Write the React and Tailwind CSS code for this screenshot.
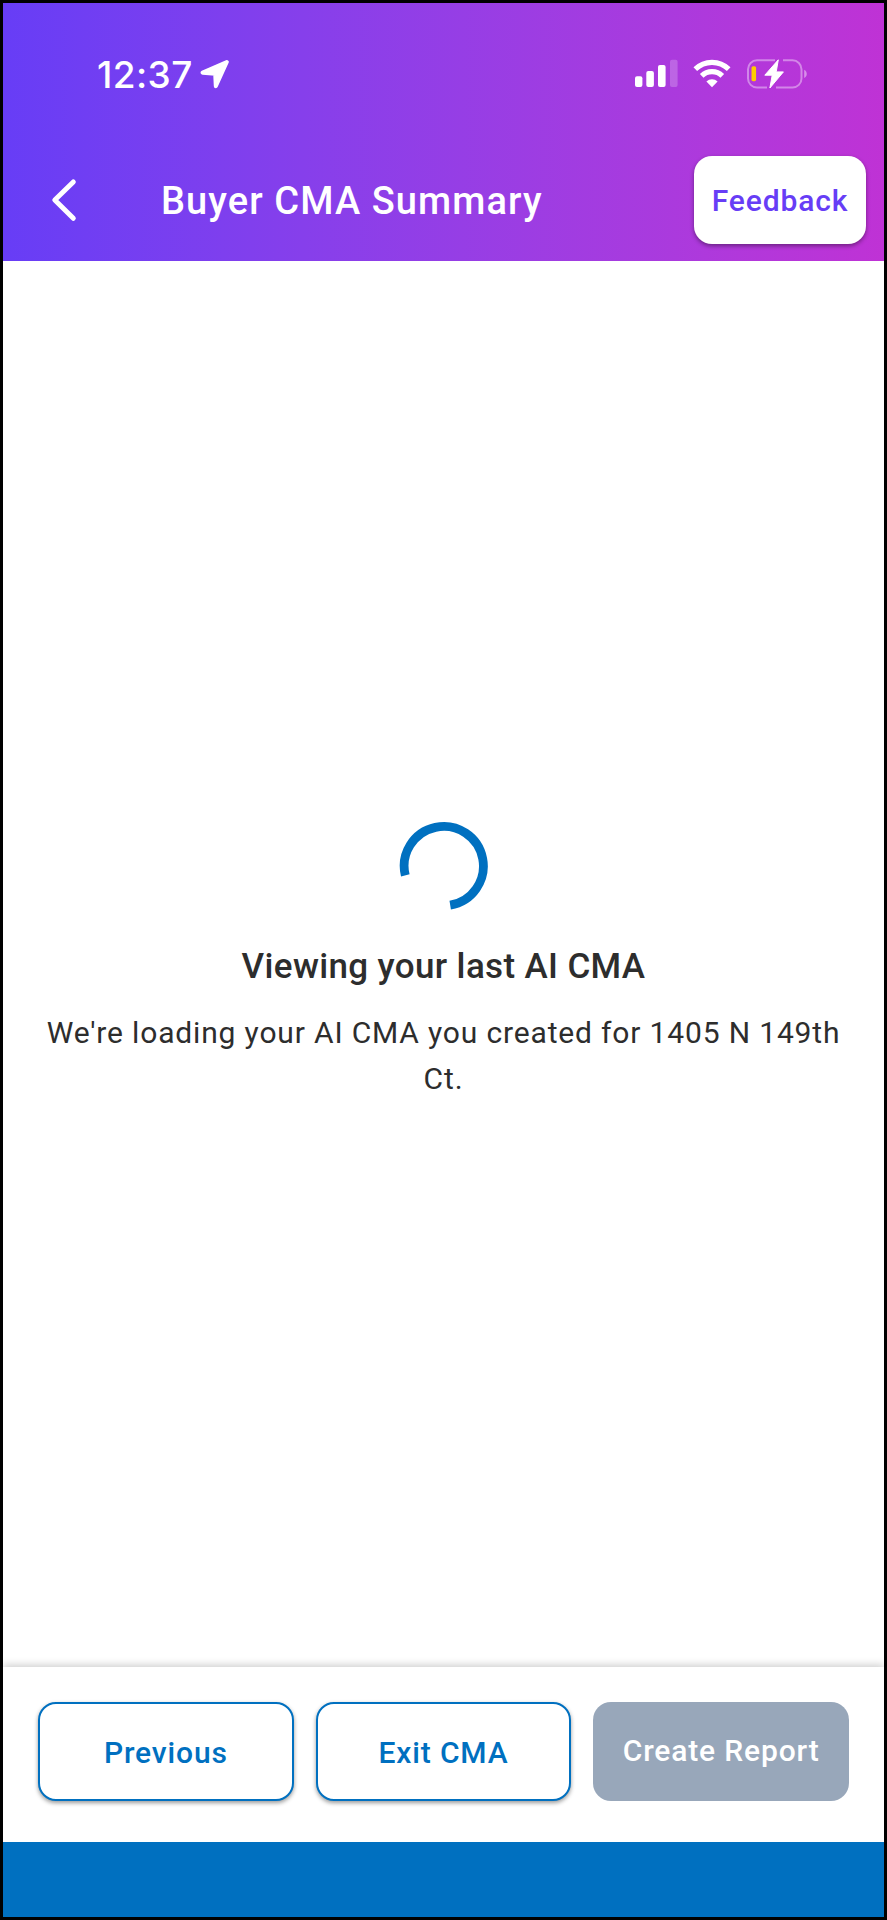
function LocationArrow() {
  return (
    <svg className="ml-[7px] h-[30px] w-[30px]" viewBox="0 0 30 30" fill="#fff" stroke="#fff" strokeWidth="4" strokeLinejoin="round">
      <path d="M26.8 3 L2.6 13.7 L15.2 14.7 L15.8 27.2 Z" />
    </svg>
  );
}

function Signal() {
  return (
    <svg className="h-[30px] w-[44px]" viewBox="0 0 44 30" fill="#fff">
      <rect x="1" y="17.3" width="7.4" height="10.7" rx="2" />
      <rect x="12.3" y="12" width="7.6" height="16" rx="2" />
      <rect x="24" y="6" width="7.6" height="22" rx="2" />
      <rect x="36" y="0.7" width="7.6" height="27.3" rx="2" opacity="0.22" />
    </svg>
  );
}

function Wifi() {
  return (
    <svg className="ml-[15px] h-[30px] w-[38px]" viewBox="0 0 38 30" fill="none" stroke="#fff" strokeWidth="5.2">
      <path d="M2.3 10.2 A23.8 23.8 0 0 1 35.7 10.2" />
      <path d="M8.7 16.8 A14.8 14.8 0 0 1 29.3 16.8" />
      <path d="M19 28.2 L13.4 22.6 A8 8 0 0 1 24.6 22.6 Z" fill="#fff" stroke="none" />
    </svg>
  );
}

function Battery() {
  return (
    <svg className="ml-[15px] h-[32px] w-[62px]" viewBox="0 0 62 32">
      <g fill="none" stroke="#fff" strokeOpacity="0.4" strokeWidth="2">
        <path d="M29 2.3 H11 A9 9 0 0 0 2 11.3 V20.5 A9 9 0 0 0 11 29.5 H21" />
        <path d="M37 2.3 H46.5 A9 9 0 0 1 55.5 11.3 V20.5 A9 9 0 0 1 46.5 29.5 H30" />
      </g>
      <path d="M58.2 11.7 C61.6 13.4 61.6 18.4 58.2 20 Z" fill="#fff" fillOpacity="0.45" />
      <rect x="5.5" y="8.2" width="4.6" height="15" rx="1.6" fill="#ffcc00" />
      <path d="M32.3 1.8 L18.8 17.2 H26.2 L23.9 30 L37.4 13.9 H30.2 Z" fill="#fff" stroke="#fff" strokeWidth="1" strokeLinejoin="round" />
    </svg>
  );
}

function OutlineButton({ children }) {
  return (
    <button className="flex h-[99px] items-center justify-center rounded-[18px] border-2 border-[#0070c0] bg-white pt-[1px] text-[30px] font-medium tracking-[0.85px] text-[#0070c0] shadow-[0_2px_4px_rgba(0,0,0,0.4)]">
      {children}
    </button>
  );
}

export default function App() {
  return (
    <div className="flex h-[1920px] w-[887px] flex-col border-3 border-black bg-white font-[Roboto,sans-serif]">
      <header className="h-[258px] bg-linear-to-r from-[#673df6] to-[#bf32d5]">
        <div className="flex h-[142px] items-center justify-between pl-[94px] pr-[76px]">
          <div className="flex items-center text-white">
            <span className="pt-[1px] font-[Inter,sans-serif] text-[37px] leading-none font-medium tracking-[0.4px]">12:37</span>
            <LocationArrow />
          </div>
          <div className="flex items-center">
            <Signal />
            <Wifi />
            <Battery />
          </div>
        </div>
        <div className="flex h-[110px] items-center pr-[18px] pl-[47px]">
          <svg className="h-[44px] w-[28px]" viewBox="0 0 28 44" fill="none" stroke="#fff" strokeWidth="5" strokeLinecap="round" strokeLinejoin="round">
            <path d="M23.3 4 L4.8 22 L23.3 40.3" />
          </svg>
          <h1 className="ml-[83px] flex-1 pt-[2px] text-[38px] leading-none font-medium tracking-[1.1px] whitespace-nowrap text-white">Buyer CMA Summary</h1>
          <button className="flex h-[88px] w-[172px] items-center justify-center rounded-[18px] bg-white pt-[1px] text-[30px] font-medium tracking-[0.85px] text-[#673df6] shadow-[0_2px_4px_rgba(0,0,0,0.4)]">
            Feedback
          </button>
        </div>
      </header>

      <main className="flex flex-1 flex-col items-center pt-[560px] text-center text-[#2d2d2d]">
        <svg className="h-[90px] w-[90px]" viewBox="-44.8 -45 90 90" fill="none" stroke="#0070c0" strokeWidth="8.8">
          <path d="M-38.5 9.4 A39.6 39.6 0 1 1 6.4 39.1" />
        </svg>
        <h2 className="mt-[34px] text-[35px] leading-[44px] font-medium tracking-[0.35px] whitespace-nowrap">Viewing your last AI CMA</h2>
        <p className="mt-[21px] w-[810px] text-[30px] leading-[46px] tracking-[0.84px]">
          We're loading your AI CMA you created for 1405 N 149th Ct.
        </p>
      </main>

      <footer>
        <div className="grid h-[175px] grid-cols-3 content-start gap-[22px] px-[35px] pt-[35px] shadow-[0_-2px_8px_rgba(0,0,0,0.2)]">
          <OutlineButton>Previous</OutlineButton>
          <OutlineButton>Exit CMA</OutlineButton>
          <button className="flex h-[99px] items-center justify-center rounded-[18px] bg-[#98a7ba] pb-[2px] text-[30px] font-medium tracking-[0.85px] whitespace-nowrap text-white" disabled>
            Create Report
          </button>
        </div>
        <div className="h-[75px] bg-[#0070c0]" />
      </footer>
    </div>
  );
}
